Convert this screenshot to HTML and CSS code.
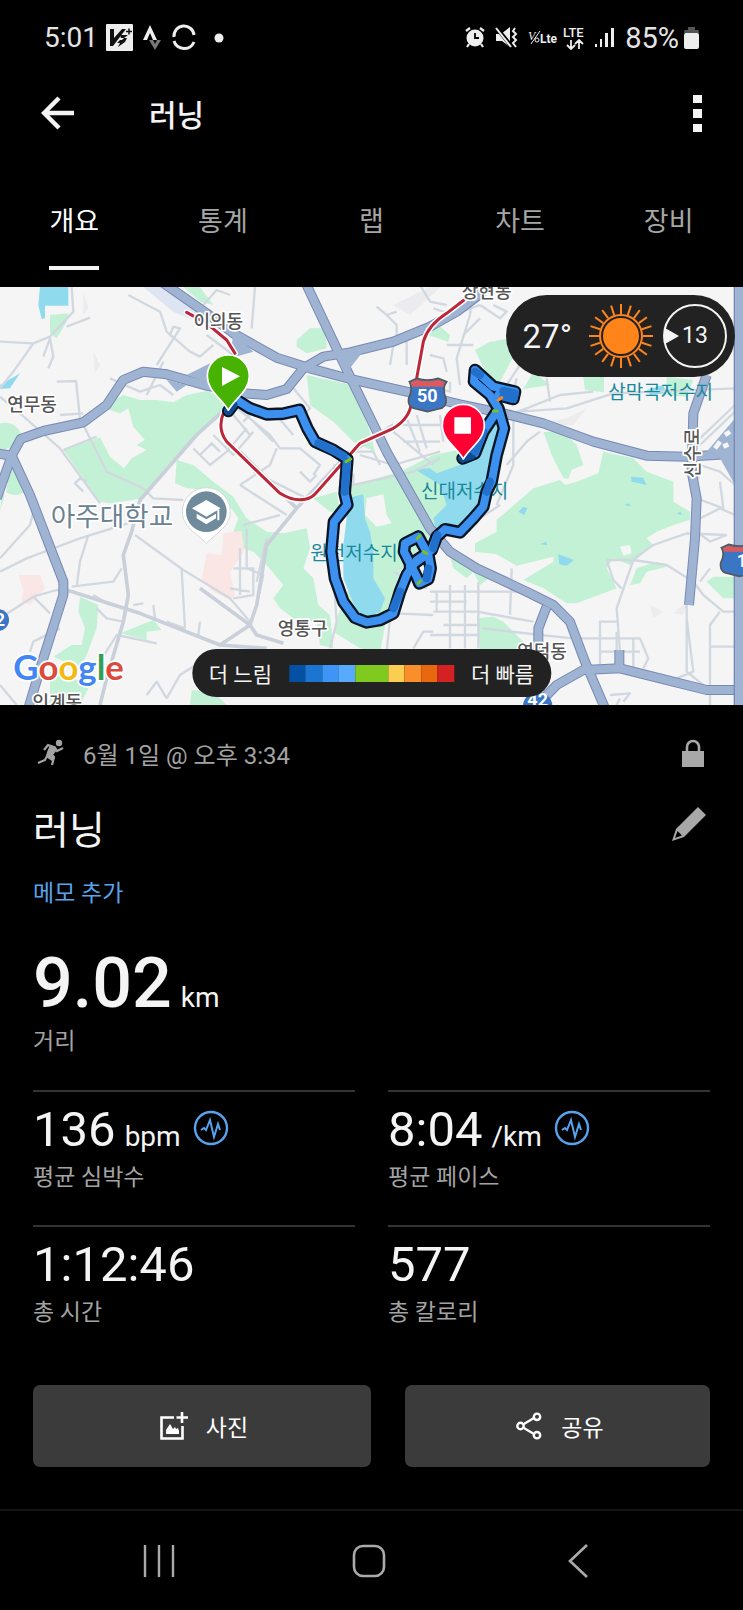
FILE: index.html
```html
<!DOCTYPE html>
<html lang="ko">
<head>
<meta charset="UTF-8">
<meta name="viewport" content="width=device-width, initial-scale=1.0">
<title>러닝</title>
<link rel="stylesheet" href="styles.css">
</head>
<body>

<!-- Status bar -->
<div class="status-bar">
<div class="status-group">
<span>5:01</span>
<svg width="27" height="27" viewBox="0 0 27 27"><rect width="27" height="27" rx="1" fill="#eee"/><path d="M4 5h4v9l8-9h4L7 22H4z" fill="#111"/><path d="M14 11h8l-4 3h3l-2 4-7 5 2-4h-3l3-3h2l2-2h-3z" fill="#111"/><path d="M20 7.500h6M23 4.500v6" stroke="#111" stroke-width="1.500"/></svg>
<svg width="21" height="27" viewBox="0 0 21 27"><path d="M2 16 9 1l7 15h-4L9 9l-3 7z" fill="#eee"/><path d="M8 16h4l2 4 2-4h4l-6 10z" fill="#777"/></svg>
<svg width="28" height="28" viewBox="0 0 28 28" fill="none" stroke="#eee" stroke-width="3"><path d="M4 13a10 10 0 0 1 20-2"/><path d="M4 17a10.500 10 0 0 0 20 1"/></svg>
<svg width="24" height="24" viewBox="0 0 24 24"><circle cx="13" cy="12" r="4.500" fill="#eee"/></svg>
</div>
<div class="status-group status-right">
<svg width="20" height="21" viewBox="0 0 20 21"><circle cx="10" cy="11" r="8.500" fill="#eee"/><path d="M1 4l4-3M19 4l-4-3M4 17l-2 3M16 17l2 3" stroke="#eee" stroke-width="2.200"/><path d="M10 6v5h4" fill="none" stroke="#000" stroke-width="1.800"/></svg>
<svg width="31" height="21" viewBox="-6 0 31 21"><path d="M0 7h5l9-7v20l-8-6H0z" fill="#eee"/><path d="M0 0l16 20" stroke="#000" stroke-width="4"/><path d="M0 1l15 19" stroke="#eee" stroke-width="2"/><path d="M19 1l-2 3 3 3-3 3 3 3-3 3 3 4" fill="none" stroke="#eee" stroke-width="2"/></svg>
<svg width="32" height="21" viewBox="-2 0 32 21" fill="#eee"><text x="0" y="13" class="vo">V</text><path d="M3 17 12 4" stroke="#eee"/><circle cx="9" cy="13" r="2" fill="none" stroke="#eee"/><text x="12" y="16" class="lte-small">Lte</text></svg>
<svg width="24" height="24" viewBox="0 0 24 24"><text x="0" y="11" class="lte">LTE</text><path d="M8 14v8M4 19l4 4 4-4M16 23v-8M12 18l4-4 4 4" fill="none" stroke="#eee" stroke-width="1.800"/></svg>
<svg width="28" height="21" viewBox="-2 0 28 21" fill="#eee"><path d="M1 17h2v3H1zM6 12h2v8H6zM11 6h3v14h-3zM17 1h3v19h-3z"/></svg>
<span class="battery-level">85%</span>
<svg width="15" height="22" viewBox="0 0 15 22"><path d="M4 0h7v3h3q1 0 1 3H0q0-3 1-3h3z" fill="#555"/><rect y="6" width="15" height="16" rx="2" fill="#eee"/></svg>
</div>
</div>

<!-- App bar -->
<header class="app-bar">
<button class="icon-button" aria-label="뒤로">
<svg width="34" height="34" viewBox="0 0 34 34" fill="none" stroke="#f4f4f4" stroke-width="4.400"><path d="M18 2 3 17l15 15M3 17h30"/></svg>
</button>
<h1 class="app-title">러닝</h1>
<button class="icon-button" aria-label="메뉴">
<svg width="9" height="37" viewBox="0 0 9 37" fill="#f4f4f4"><path d="M0 0h9v8H0zM0 14h9v9H0zM0 29h9v8H0z"/></svg>
</button>
</header>

<nav class="tabs">
<a href="#overview" class="active"><span>개요</span></a>
<a href="#stats"><span>통계</span></a>
<a href="#laps"><span>랩</span></a>
<a href="#charts"><span>차트</span></a>
<a href="#gear"><span>장비</span></a>
</nav>

<!-- Route map -->
<section class="map">
<svg class="map-canvas" viewBox="0 6 2229 1254" preserveAspectRatio="xMidYMid slice">
<rect y="6" width="2229" height="1254" fill="#f5f5f5"/>

<!-- parks -->
<g fill="#c3f1d5">
<path d="M0 415Q45 405 62 445L55 475 20 492H0zM35 530 75 620Q45 640 18 622zM5 630 15 625 0 680z"/>
<path d="M328 375 345 345 370 330 420 345 470 345 520 352 560 330 620 318 690 345 680 380 590 450 430 640 330 655 300 650 190 495 300 457 330 515 372 550 395 520 440 495 410 480 435 465 400 425 385 370 360 385z"/>
<path d="M530 525 580 540 640 590 700 635 740 700 800 740 850 745 920 730 930 790 910 850 940 880 955 960 990 990 1000 1090 960 1080 950 1010 880 1000 840 970 820 940 850 900 800 840 760 800 730 790 700 740 715 700 680 650 620 615 560 610 525 595z"/>
<path d="M920 270 1010 290 1060 300 1080 360 1110 440 1125 500 1060 470 1000 410 930 360zM890 165 930 130 975 130 980 190 920 205 890 185zM1285 150 1315 120 1350 150 1345 170z"/>
<path d="M1040 605 1200 560 1300 510 1400 490 1380 700 1300 740 1200 860 1160 1000 1140 1100 1080 1090 1000 1040 1010 1000 1060 880 1040 760zM940 640 1010 620 1020 680 990 680z"/>
<path d="M1630 440 1690 442 1730 480 1750 540 1715 555 1705 582 1690 578 1655 510z"/>
<path d="M1810 500 1900 520 1940 560 2020 590 2020 650 2070 680 2070 705 2020 720 1970 740 1940 760 1960 780 1890 840 1840 820 1820 850 1850 910 1730 955 1700 955 1630 910 1570 885 1660 830 1660 815 1550 842 1490 808 1425 800 1425 775 1490 740 1490 705 1600 610 1680 585 1695 600 1730 590 1795 565z"/>
<path d="M1425 195 1470 170 1530 160 1540 215 1500 290 1470 290zM1600 260 1650 300 1570 312zM1750 275H1812V322L1755 315zM2000 275 2080 285 2060 335 2000 330zM2120 890 2140 875H2205V940H2170zM1890 900 1910 850 1970 830 2000 845 1940 860 1920 895zM1430 1000 1480 995 1510 1010 1570 1070 1550 1095H1440zM1415 850 1480 870 1440 900z"/>
<path d="M150 90 205 85 200 110 170 160 150 145zM240 935 295 960 290 1030 260 1110 240 1150 160 1115 215 1080H245L255 1030 235 980zM360 1045 460 1005 485 1035 440 1040 440 1065zM150 1160 250 1190 270 1200 240 1260H150zM575 1215 630 1220 600 1260H570zM550 6H600L640 60 600 50zM1350 815 1420 860 1400 880 1360 850zM600 1230H650L680 1260H600z"/>
</g>
<g fill="#f5f5f5">
<path d="M1100 640 1150 628 1160 690 1175 715 1130 725 1095 690zM1860 785 1890 780 1895 805 1870 812z"/>
</g>
<g fill="#fae6e4">
<path d="M620 805 665 810 670 745 725 738 732 800 690 860 705 930 690 945 640 920 605 885zM55 870 120 870 135 910 90 960 65 950 70 915z"/>
</g>
<g fill="#ececee">
<path d="M1180 60 1300 0 1330 0 1230 90zM250 20 265 70 250 90zM280 200 300 240 285 265zM1560 420 1700 400 1760 370 1720 420zM1950 960 1990 980 1960 1000zM2060 950 2020 985 2050 990z"/>
<path d="M430 6 500 6 640 130 520 80z" fill="#dfe4f2"/>
</g>

<!-- water -->
<g fill="#90daee">
<path d="M120 6H205V62H135V100L125 102 115 60zM0 300 60 265 30 310 0 312z"/>
<path d="M1040 640 1090 628 1095 700 1110 740 1120 800 1120 880 1155 940 1140 980 1080 1005 1030 880 1030 780 1040 700z"/>
<path d="M1245 553 1290 550 1310 565 1380 540 1420 500 1480 400 1505 440 1460 620 1400 720 1350 725 1310 740 1300 700 1340 660 1320 600z"/>
<path d="M1893 575 1930 578 1940 600 1895 590zM1555 680 1570 665 1582 670 1572 690zM1675 808 1722 825 1700 842 1678 838zM1875 660 1885 655 1893 664zM2030 685 2042 680 2045 690zM1620 778 1638 770 1642 780zM1940 315 1990 300 2000 325 1950 330z"/>
</g>

<!-- streets -->
<g fill="none" stroke="#d2d8e0" stroke-width="7" stroke-linejoin="round">
<path d="M0 170 100 175 150 155 220 80 215 6M130 215 150 160 160 215 145 250M100 175 40 260 0 310M200 125 270 98M385 30 480 80 500 140 570 200 600 215 640 180M470 240 540 130 520 125 510 150 530 165M440 330 490 230M170 290 228 288 240 400 320 560 430 610 460 640 550 645M330 280 420 320 480 300 520 330M0 335 60 385 180 490 300 655M180 390 250 385"/>
<path d="M190 495 290 455M580 490 630 540 680 500 740 430M600 510 635 475 660 500M640 450 700 510 760 440M700 390 750 450M250 620 225 595 240 580 260 590M0 860 80 820 240 760 400 710M230 905 240 830 265 750M0 820 90 720 100 680M215 905 340 890 365 850M405 750 550 855 690 940 750 1010M545 855 555 1030M210 920 170 915 100 935 30 980 0 1000M100 935 150 985M90 1100 100 1070 180 1030M280 930 330 960M290 970 320 1000 370 1010M300 1130 350 1050 470 1075M400 960 430 955M460 960 465 1000M500 1010 555 1030M600 1010 595 1050M440 1230 470 1190 500 1240M500 1240 540 1170 650 1100M0 1200 50 1260"/>
<path d="M610 60 650 15 690 30M620 150 700 210M765 6 755 130M700 360 810 450 840 490 900 490 960 540 940 570M830 490 810 540 720 600M720 600 860 690M760 560 920 640M820 380 880 450M740 390 820 470M730 410 780 360M880 310 930 370 900 400M700 850 760 850 760 930 700 940M720 790 720 930M690 910 750 920M740 730 740 850 790 870 770 960M800 760 770 890M840 690 730 720M900 560 930 590 950 570M1000 540 1060 570 1060 600 1240 560 1320 520M1080 510 1180 540 1320 500M1040 500 1120 500 1140 540"/>
<path d="M1130 65 1160 90 1190 120 1190 150M1160 90 1190 80M1260 0 1290 50 1340 60M1300 70 1360 90 1440 60M1340 180 1420 180M1290 210 1330 220 1340 260M1180 180 1170 240M1220 160 1220 240M1420 0 1410 90 1370 220 1380 300M1440 60 1500 100 1520 80 1480 60M1440 100 1390 150M1210 420 1320 420M1210 470 1320 470M1220 400 1260 500M1250 390 1280 490M1180 440 1300 540M1320 390 1330 470M1280 300 1350 320 1350 290"/>
<path d="M1290 920H1560M1300 980H1430L1600 1010M1310 980V920M1350 900V1090M1395 900V1090M1435 890V1090M1290 1050H1440M1330 1020H1440M1290 950H1400M1535 850 1530 990M1180 985 1300 990M1170 1000 1160 1100M1240 1090 1270 1040 1300 1040M1000 870 1010 1010 990 1090M1180 860 1280 910M1450 1030 1620 1050 1720 1060 1880 1060 1920 1060 1945 1120 1930 1150M1800 1140V1010H1850M1800 1060H1850M1800 1100H1920M1850 1040V1140M1900 1060V1160"/>
<path d="M1820 825H1900L1850 970 1860 1100M1820 825 1840 885 1865 910M1890 830 1960 780 2060 745 2180 750M1900 825 2000 840 2080 890 2110 930 2170 980H2205M2130 1260V1020L2160 980M2100 890 2130 850M2060 960 2060 1160 2110 1200M2090 740 2130 770 2180 750M2100 700 2160 670 2205 690M2100 540 2160 560 2205 600M2090 640 2170 670 2160 590M2130 1085H2205M2060 1000 2080 1160 2030 1180M1830 1230 1890 1225 1870 1250M1850 1260 1860 1240"/>
<path d="M1500 400 1580 370 1680 330 1780 320M1560 380 1700 370 1840 325 2205 310M1520 540 1580 470 1620 440M1490 660 1540 540 1540 400M1440 700 1500 660M1550 280 1530 360M1640 280 1650 350M2100 460 2205 360M2205 380 2100 480M1520 300 1560 240M2100 560 2080 620"/>
</g>
<g fill="none" stroke="#c9d0da" stroke-width="11" stroke-linejoin="round">
<path d="M200 915 420 985 660 1080 800 1090M700 350 590 450 420 645 395 740 370 810 385 930 370 1010 320 1180 300 1260"/>
<path d="M890 670 800 780 770 960 750 1020 660 1080M600 910 750 1020 770 1050 850 1075M890 670 720 500M890 670 1040 510 1180 420"/>
</g>

<!-- highways -->
<g fill="none" stroke-linejoin="round">
<g stroke="#7889b3" stroke-width="30">
<path id="hw-a" d="M470 -20 620 85 700 145 830 218 930 250 1050 282 1230 322 1380 358 1510 385 1630 415 1780 470 1940 512 2060 515 2229 505"/>
<path id="hw-b" d="M915 -10 1050 275 1160 500 1290 730 1350 800 1430 850 1580 920 1660 960 1710 1010 1755 1130 1815 1270"/>
<path id="hw-c" d="M-10 505 35 512 62 462 130 438 250 412 320 360 370 285 430 260 500 268 620 302 730 325 800 330 860 312 910 250 970 215 1050 202 1180 170 1290 125 1370 80 1450 20"/>
<path id="hw-d" d="M-10 640 35 512 90 630 190 890 190 930 130 1120 85 1270"/>
<path id="hw-e" d="M2120 270 2080 385 2075 560 2090 640 2085 760 2067 960M1640 965 1615 1030V1100M1858 1095V1150"/>
<path id="hw-f" d="M1610 1262 1670 1200 1750 1155 1860 1150 1980 1180 2120 1215H2229"/>
</g>
<g stroke="#9fb3d3" stroke-width="24">
<use href="#hw-a"/><use href="#hw-b"/><use href="#hw-c"/><use href="#hw-d"/><use href="#hw-e"/><use href="#hw-f"/>
</g>
<path d="M700 145 760 200 690 220M560 270 630 235 640 300zM500 285 560 300 530 320zM1000 200 1085 205 1050 250zM2120 500 2205 400V600L2160 520z" fill="#9fb3d3"/>
<path d="M2218 0V1260" stroke="#7889b3" stroke-width="34"/>
<path d="M2218 0V1260" stroke="#9fb3d3" stroke-width="26"/>
<path d="M2145 490 2160 470M2175 450 2190 440M2170 485 2185 478" stroke="#f5f5f5" stroke-width="14"/>
</g>

<!-- subway line -->
<g fill="none" stroke-linejoin="round" stroke-linecap="round">
<path d="M560 82 620 115 680 165 705 205M672 380Q650 430 680 470L840 625Q880 650 915 643 935 640 950 622L1040 520 1080 475 1180 430Q1230 400 1235 350L1250 280 1270 170Q1285 120 1340 85L1392 45" stroke="#fff" stroke-width="18"/>
<path d="M560 82 620 115 680 165 705 205M672 380Q650 430 680 470L840 625Q880 650 915 643 935 640 950 622L1040 520 1080 475 1180 430Q1230 400 1235 350L1250 280 1270 170Q1285 120 1340 85L1392 45" stroke="#bb2738" stroke-width="9"/>
</g>

<!-- place names -->
<g class="place">
<text x="655" y="129">이의동</text>
<text x="96" y="379">연무동</text>
<text x="1460" y="40">상현동</text>
<text x="908" y="1050">영통구</text>
<text x="1626" y="1119">영덕동</text>
<text x="172" y="1272">인계동</text>
<text x="0" y="0" transform="translate(2098 505) rotate(-90)">신수로</text>
</g>
<text class="campus" x="336" y="722">아주대학교</text>
<g class="lake">
<text x="1394" y="640">신대저수지</text>
<text x="1062" y="825">원천저수지</text>
<text x="1982" y="343">삼막곡저수지</text>
</g>

<!-- university pin -->
<path d="M619 775C590 745 547 725 547 680a72 72 0 0 1 144 0C691 725 648 745 619 775z" fill="#fff" stroke="#d5d8db" stroke-width="3"/>
<circle cx="619" cy="680" r="61" fill="#6f8a9a"/>
<path d="M576 670 619 645 662 670 619 695zM590 686 619 703 648 686V700L619 718 590 700zM652 674H658V706H652z" fill="#fff"/>

<!-- road shields -->
<g stroke="#54595e" stroke-width="5">
<path d="M1228 290 1250 280Q1282 290 1315 280L1340 290Q1325 310 1338 340 1342 368 1315 372L1282 380 1250 372Q1222 368 1226 340 1240 310 1228 290z" fill="#3a76c4"/>
<path d="M2164 788 2186 778Q2218 788 2251 778V868L2218 874 2186 866Q2158 862 2162 834 2176 808 2164 788z" fill="#3a76c4"/>
</g>
<path d="M1232 292 1250 284Q1282 294 1315 284L1334 292 1330 305H1236zM2168 790 2186 782Q2218 792 2251 782V800H2172z" fill="#dd5a5c"/>
<circle cx="-6" cy="1005" r="33" fill="#3a76c4"/>
<circle cx="1613" cy="1264" r="44" fill="#3a76c4"/>
<g class="shield-text">
<text x="1282" y="352">50</text>
<text x="2226" y="846">1</text>
<text x="1613" y="1262">42</text>
<text x="0" y="1022">2</text>
</g>

<!-- recorded track -->
<g fill="none" stroke-linejoin="round" stroke-linecap="round">
<g stroke="#0a1626" stroke-width="38">
<path id="track" d="M685 378 710 345 750 370 800 388 850 386 898 375 922 430 945 470 1000 495 1042 522 1034 625 1042 660 1002 710 994 800 1005 880 1030 950 1065 998 1100 1012 1140 1005 1180 985 1200 920 1220 870 1250 825 1295 795 1310 755 1335 733 1380 742 1420 700 1450 665 1460 620 1475 590 1490 510 1512 430 1495 370 1470 330 1422 290 1425 255 1480 305 1545 320 1540 342 1495 330M1490 380 1450 440 1425 505 1388 520"/>
<path id="loop" d="M1255 755 1215 775 1212 800 1250 875 1258 895 1285 882 1292 850 1285 810 1255 755M1230 845 1285 805"/>
</g>
<g stroke="#3c90ef" stroke-width="24">
<use href="#track"/><use href="#loop"/>
</g>
<path d="M685 378 700 358M1388 520 1415 512" stroke="#0b4b91" stroke-width="24"/>
<path d="M955 475 1030 512M1040 530 1034 620M1312 750 1300 790M1460 620 1470 590M1425 260 1440 270M1510 318 1545 325 1540 342 1510 335M1450 440 1425 500M1285 850 1280 880M1180 970 1200 920" stroke="#2070cc" stroke-width="24"/>
<path d="M1038 530 1052 522M1252 760 1260 752M1255 895 1262 888M1270 800 1280 805M1480 378H1492" stroke="#79c021" stroke-width="9"/>
<path d="M1495 345 1505 338" stroke="#f08a2a" stroke-width="10"/>
</g>

<!-- start and finish pins -->
<g stroke="#fff" stroke-width="5" stroke-linejoin="round">
<path d="M685 376C665 340 622 318 622 273a63 63 0 0 1 126 0C748 318 705 340 685 376z" fill="#47b201"/>
<path d="M1390 522C1370 486 1327 466 1327 421a63 63 0 0 1 126 0C1453 466 1410 486 1390 522z" fill="#ff0033"/>
</g>
<path d="M666 246V303L720 274zM1363 397H1413V446H1363z" fill="#fff"/>

<!-- map provider -->
<text class="google" x="40" y="1186"><tspan fill="#4285f4">G</tspan><tspan fill="#db4a3d">o</tspan><tspan fill="#f4b911">o</tspan><tspan fill="#4285f4">g</tspan><tspan fill="#34a04f">l</tspan><tspan fill="#db4a3d">e</tspan></text>
</svg>

<div class="weather">
<span class="temp">27°</span>
<svg width="64" height="64" viewBox="-32 -32 64 64">
<circle r="18" fill="#ff851b"/>
<circle r="21" fill="none" stroke="#ff851b" stroke-width="2"/>
<g stroke="#ff851b" stroke-width="2">
<path id="rays" d="M0-22V-32M0 22V32M22 0H32M-22 0H-32"/>
<use href="#rays" transform="rotate(18)"/><use href="#rays" transform="rotate(36)"/><use href="#rays" transform="rotate(54)"/><use href="#rays" transform="rotate(72)"/>
</g>
</svg>
<span class="wind">13</span>
</div>

<div class="legend">
<span>더 느림</span>
<div class="scale"><i class="s1"></i><i class="s2"></i><i class="s3"></i><i class="s4"></i><i class="s5"></i><i class="s6"></i><i class="s7"></i><i class="s8"></i><i class="s9"></i></div>
<span>더 빠름</span>
</div>
</section>

<!-- Activity details -->
<main class="details">
<div class="meta">
<svg width="27" height="28" viewBox="0 0 27 28"><circle cx="22" cy="4" r="3.200" fill="#a3a3a3"/><path d="M7 11 11 6 17 8 13 14 17 18 15 26M18 9 20 12 26 9M11 15 8 21 1 24" fill="none" stroke="#a3a3a3" stroke-width="2.200"/><path d="M13 6 19 8 20 11 16 16 18 19 15 22 9 18 10 13z" fill="#a3a3a3"/></svg>
<span>6월 1일 @ 오후 3:34</span>
<svg class="lock" width="22" height="28" viewBox="0 0 22 28"><path d="M0 12h22v16H0z" fill="#a8a8a8"/><path d="M5 13V8a6 6 0 0 1 12 0v5" fill="none" stroke="#a8a8a8" stroke-width="2.600"/></svg>
</div>
<div class="title-row">
<h2>러닝</h2>
<button class="icon-button" aria-label="편집">
<svg width="34" height="34" viewBox="0 0 34 34"><path d="M26 0l8 8-22 22-12 4 4-12z" fill="#a8a8a8"/><path d="M5.500 24 3 31l7-2.500z" fill="#000"/></svg>
</button>
</div>
<a class="memo" href="#memo">메모 추가</a>

<p class="distance">9.02 <small>km</small></p>
<p class="label">거리</p>

<div class="stats">
<div class="stat">
<p class="value">136 <small>bpm</small><svg width="36" height="36" viewBox="0 0 36 36" fill="none" stroke="#58a3ee"><circle cx="18" cy="18" r="16" stroke-width="2.400"/><path d="M8 20l3-2 2 2 4-10 4 17 4-13 2 6" stroke-width="2"/></svg></p>
<p class="label">평균 심박수</p>
</div>
<div class="stat">
<p class="value">8:04 <small>/km</small><svg width="36" height="36" viewBox="0 0 36 36" fill="none" stroke="#58a3ee"><circle cx="18" cy="18" r="16" stroke-width="2.400"/><path d="M8 20l3-2 2 2 4-10 4 17 4-13 2 6" stroke-width="2"/></svg></p>
<p class="label">평균 페이스</p>
</div>
<div class="stat">
<p class="value">1:12:46</p>
<p class="label">총 시간</p>
</div>
<div class="stat">
<p class="value">577</p>
<p class="label">총 칼로리</p>
</div>
</div>

<div class="actions">
<button>
<svg width="28" height="28" viewBox="0 0 28 28"><path d="M14 5.500H1.500v21h21V14" fill="none" stroke="#fff" stroke-width="2.600"/><path d="M22 0v11M16.500 5.500H28" stroke="#fff" stroke-width="2.600"/><path d="M6 22v-4l4-6 3 5 2-2 1 2 2-1 1 3v3z" fill="#fff"/></svg>
사진
</button>
<button>
<svg width="28" height="28" viewBox="0 0 28 28" fill="none" stroke="#fff" stroke-width="2.400"><path d="M8 12.500 19 6M8 15.500 19 22"/><circle cx="5.500" cy="14" r="3.200"/><circle cx="22" cy="4.800" r="3.200"/><circle cx="22" cy="23.200" r="3.200"/></svg>
공유
</button>
</div>
</main>

<!-- System navigation -->
<footer class="nav-bar">
<button aria-label="최근 앱"><svg width="32" height="34" viewBox="0 0 32 34" stroke="#aaa" stroke-width="2.400"><path d="M2 1v32M16 1v32M30 1v32"/></svg></button>
<button aria-label="홈"><svg width="34" height="34" viewBox="0 0 34 34" fill="none" stroke="#aaa" stroke-width="2.600"><rect x="2" y="2" width="30" height="30" rx="9"/></svg></button>
<button aria-label="뒤로"><svg width="20" height="34" viewBox="0 0 20 34" fill="none" stroke="#aaa" stroke-width="2.600"><path d="M19 1 2 17l17 16"/></svg></button>
</footer>

</body>
</html>
```

FILE: styles.css
```css
body {
margin: 0;
background-color: #000;
color: #f4f4f4;
font-family: Roboto, "Noto Sans CJK KR", sans-serif;
}

h1, h2, p {
margin: 0;
font-weight: 400;
}

svg {
display: block;
flex-shrink: 0;
}

a {
text-decoration: none;
}

button {
padding: 0;
border: none;
background: none;
color: white;
font-family: inherit;
cursor: pointer;
}

/* Status bar */
.status-bar {
display: flex;
justify-content: space-between;
align-items: center;
height: 75px;
padding: 0 44px;
color: #e4e4e4;
font-size: 28px;
}

.status-group {
display: flex;
align-items: center;
gap: 8px;
}

.status-right {
gap: 5px;
}

.battery-level {
font-size: 29px;
}

.vo {
font: italic 12px "Liberation Serif", serif;
}

.lte-small {
font: bold 12px Roboto, sans-serif;
}

.lte {
font: 500 13px Roboto, sans-serif;
fill: #eee;
}

/* App bar */
.app-bar {
display: flex;
align-items: center;
height: 76px;
padding: 0 41px;
}

.app-title {
flex: 1;
margin-left: 74px;
font-size: 30px;
font-weight: 500;
}

/* Tabs */
.tabs {
display: flex;
height: 136px;
}

.tabs a {
flex: 1;
text-align: center;
color: #a6a6a6;
font-size: 27px;
}

.tabs span {
display: inline-block;
padding: 53px 0 26px;
line-height: 36px;
}

.tabs .active {
color: #fff;
}

.tabs .active span {
border-bottom: 4px solid #f4f4f4;
}

/* Map */
.map {
position: relative;
}

.map-canvas {
width: 100%;
}

.place, .campus, .lake, .google, .shield-text {
font-family: Roboto, "Noto Sans CJK KR", sans-serif;
text-anchor: middle;
paint-order: stroke;
stroke: #fff;
stroke-width: 10px;
stroke-linejoin: round;
}

.place {
font-size: 54px;
font-weight: 500;
fill: #555;
}

.campus {
font-size: 80px;
fill: #6a8292;
}

.lake {
font-size: 57px;
fill: #17899b;
stroke: none;
}

.shield-text {
font-size: 54px;
font-weight: 700;
fill: #fff;
stroke: none;
}

.google {
font-family: Lato, sans-serif;
font-size: 104px;
font-weight: 700;
text-anchor: start;
}

.weather {
position: absolute;
top: 8px;
right: 8px;
display: flex;
align-items: center;
gap: 10px;
padding: 9px 8px 9px 17px;
border-radius: 41px;
background-color: #222;
}

.temp {
margin-right: 7px;
font-size: 33px;
}

.wind {
position: relative;
box-sizing: border-box;
width: 64px;
height: 64px;
border: 2px solid #f4f4f4;
border-radius: 50%;
line-height: 60px;
text-align: center;
font-size: 23px;
}

.wind::before {
content: "";
position: absolute;
left: 0;
top: 22px;
border: 8px solid transparent;
border-left: 14px solid #f4f4f4;
border-right: none;
}

.legend {
position: absolute;
bottom: 8px;
left: 50%;
transform: translateX(-50%);
display: flex;
align-items: center;
gap: 17px;
height: 48px;
padding: 0 17px;
border-radius: 24px;
background-color: #222;
font-size: 21px;
white-space: nowrap;
}

.scale {
display: flex;
width: 165px;
height: 17px;
}

.scale i {
flex: 1;
}

.scale .s5 {
flex: 2;
}

.s1 { background-color: #0450a4; }
.s2 { background-color: #1c76d1; }
.s3 { background-color: #3e95f5; }
.s4 { background-color: #58aaff; }
.s5 { background-color: #80ca20; }
.s6 { background-color: #fbcd50; }
.s7 { background-color: #f98f2a; }
.s8 { background-color: #e9670f; }
.s9 { background-color: #d32124; }

/* Details */
.details {
padding: 30px 33px 42px;
}

.meta {
display: flex;
align-items: center;
height: 36px;
padding: 0 6px 0 4px;
color: #a3a3a3;
font-size: 24px;
}

.meta span {
flex: 1;
margin-left: 19px;
}

.title-row {
display: flex;
justify-content: space-between;
align-items: flex-start;
margin-top: 36px;
padding-right: 4px;
}

.title-row h2 {
font-size: 39px;
line-height: 48px;
}

.memo {
display: block;
margin-top: 23px;
color: #58a3ee;
font-size: 23px;
line-height: 32px;
}

.distance, .value {
display: flex;
align-items: baseline;
}

.distance {
gap: 9px;
height: 72px;
margin-top: 37px;
font-size: 70px;
font-weight: 500;
line-height: 72px;
}

small {
font-size: 28px;
font-weight: 400;
line-height: 32px;
}

.label {
margin-top: 4px;
color: #a3a3a3;
font-size: 23px;
line-height: 32px;
}

.distance + .label {
margin-top: 7px;
}

.stats {
display: grid;
grid-template-columns: 1fr 1fr;
column-gap: 33px;
margin-top: 32px;
}

.stat {
padding: 10px 0 31px;
border-top: 2px solid #333;
}

.value {
gap: 9px;
height: 56px;
font-size: 49px;
line-height: 56px;
}

.value svg {
margin-left: 3px;
}

/* Buttons */
.actions {
display: grid;
grid-template-columns: 338fr 305fr;
gap: 34px;
margin-top: 25px;
}

.actions button {
display: flex;
justify-content: center;
align-items: center;
gap: 18px;
height: 82px;
padding-left: 4px;
border-radius: 7px;
background-color: #3b3b3b;
font-size: 23px;
}

.actions button:hover {
background-color: #4a4949;
}

.nav-bar {
display: flex;
height: 99px;
padding: 0 60px 0 54px;
border-top: 2px solid #141414;
}

.nav-bar button {
display: flex;
flex: 1;
justify-content: center;
align-items: center;
}
```
